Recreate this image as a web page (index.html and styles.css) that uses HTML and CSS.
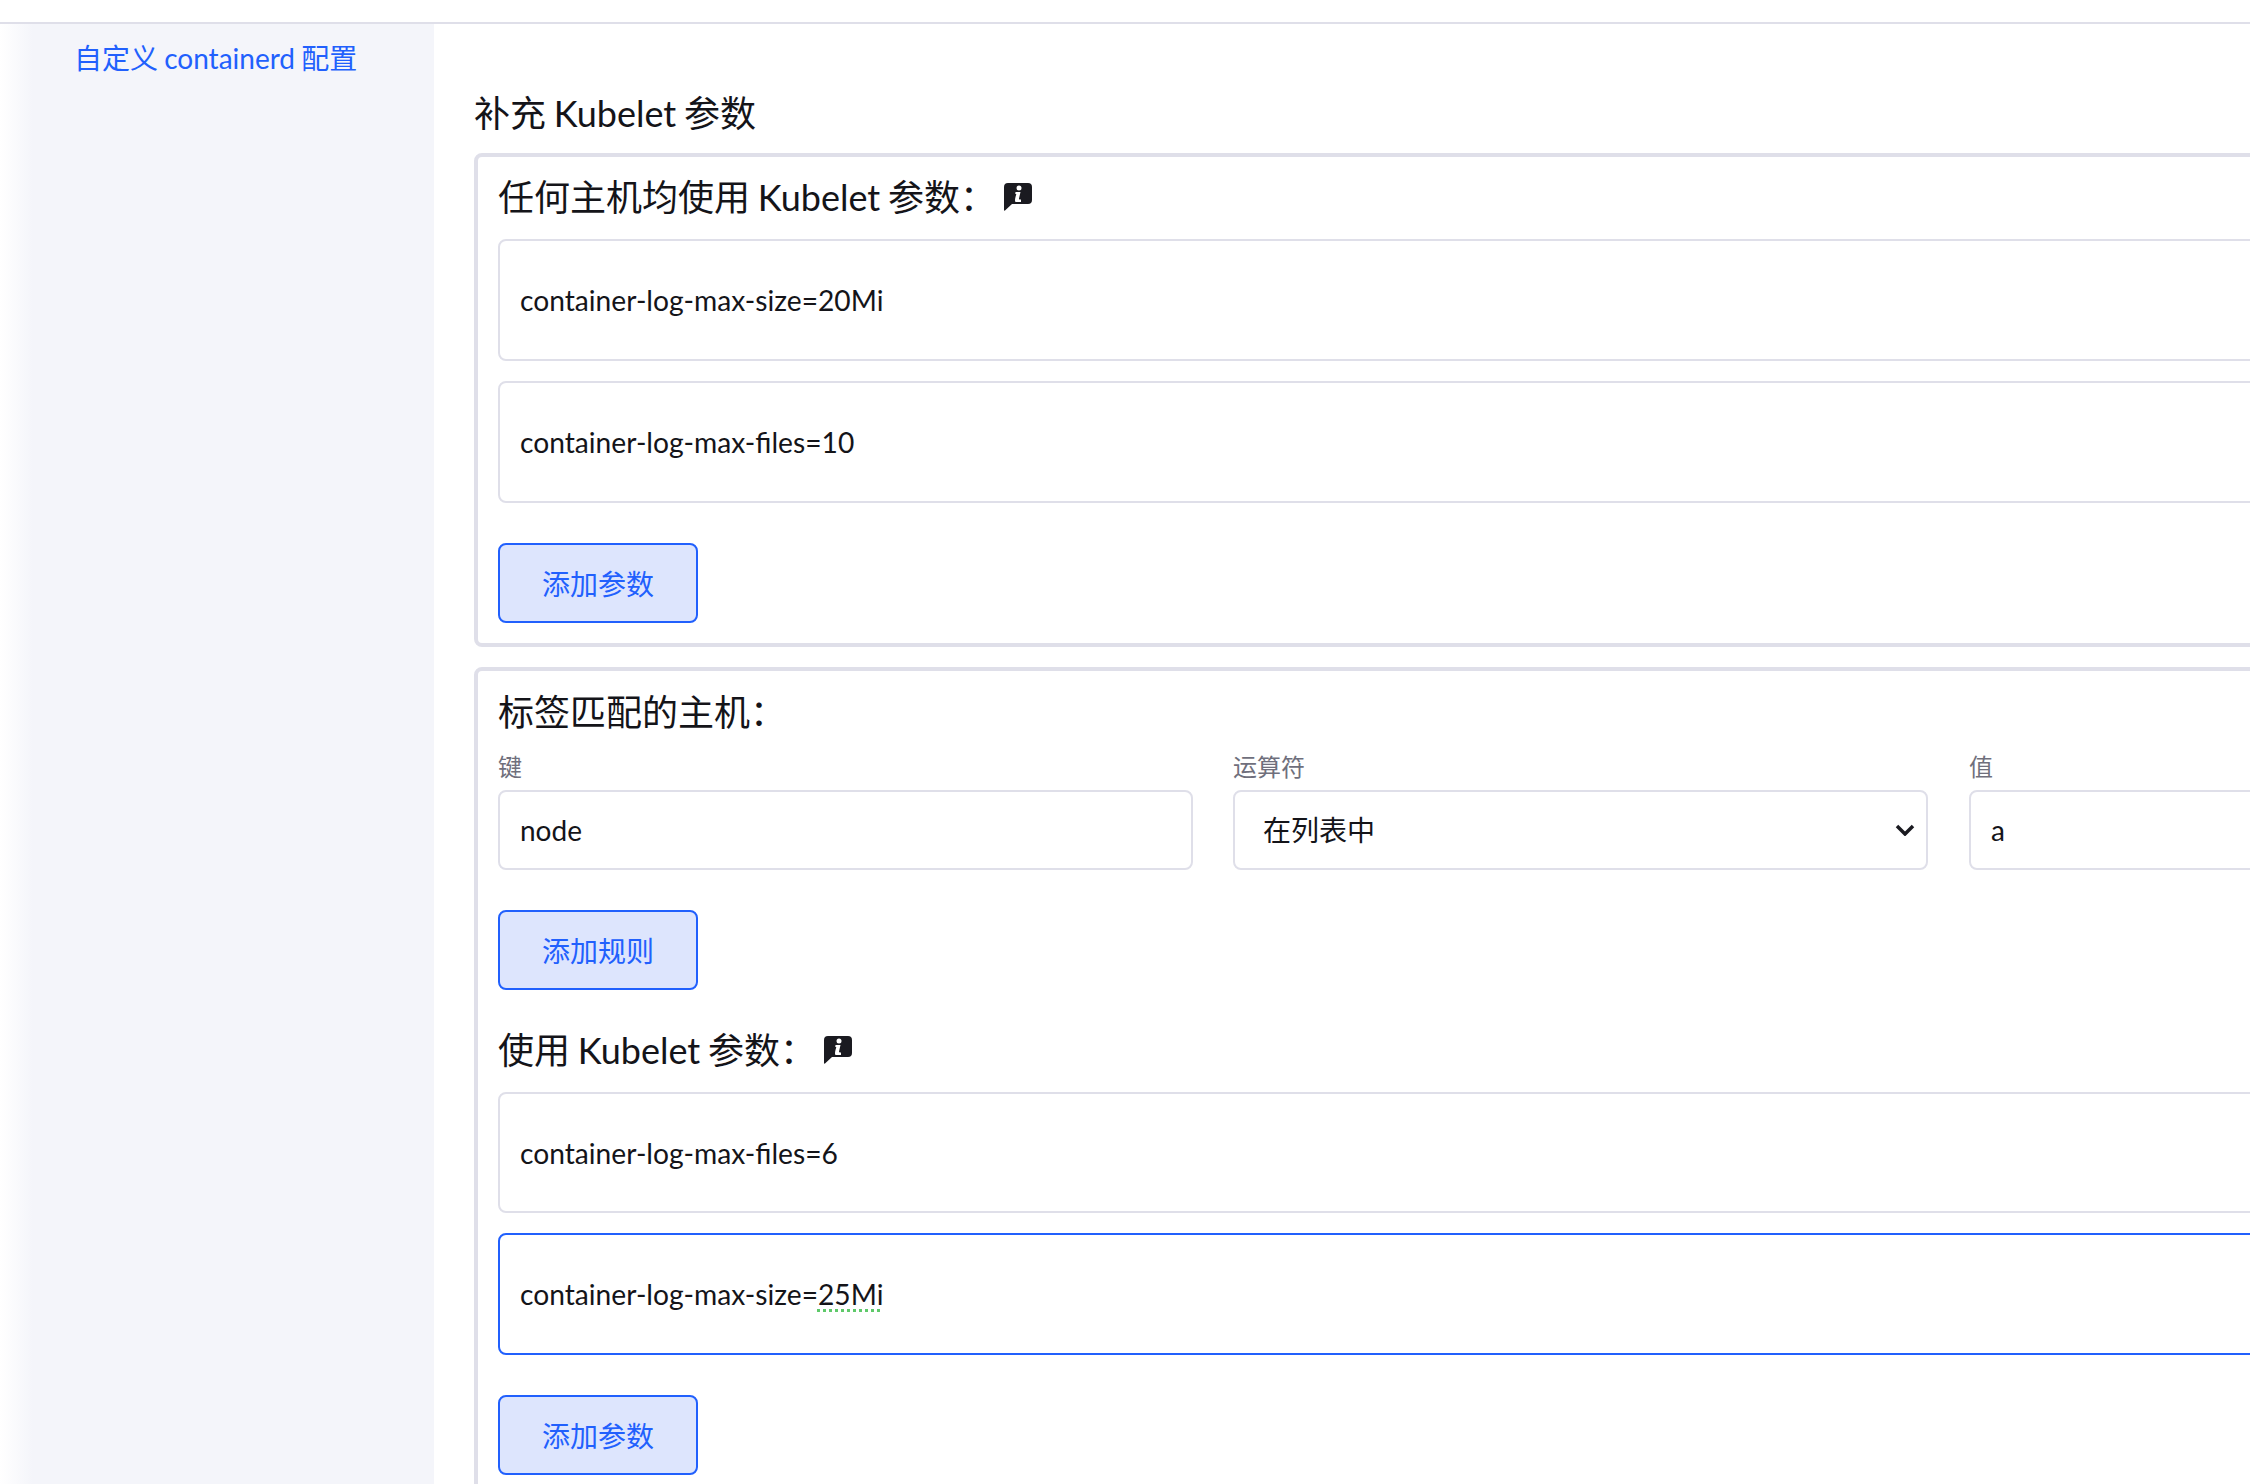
FILE: index.html
```html
<!DOCTYPE html>
<html lang="zh-CN">
<head>
<meta charset="utf-8">
<title>补充 Kubelet 参数</title>
<link rel="stylesheet" href="styles.css">
</head>
<body>
<header class="topbar"></header>
<div class="layout">
  <aside class="sidebar">
    <a class="side-link" href="#">自定义 containerd 配置</a>
  </aside>
  <main class="main">
    <h2 class="title">补充 Kubelet 参数</h2>
    <section class="box">
      <h3 class="heading"><span>任何主机均使用 Kubelet 参数：</span>
        <svg class="info" viewBox="0 0 28 28"><path d="M4 0H24A4 4 0 0 1 28 4V17A4 4 0 0 1 24 21H8L1 27.500Q0 28 0 27V4A4 4 0 0 1 4 0Z" fill="#1a1a20"/><circle cx="15" cy="5" r="2.500" fill="#fff"/><path d="M11.500 9H16.500L15 15.500Q14.800 16.800 17 16.500V19H11.500Q10.500 18 11.500 14L12.300 11H11.300Z" fill="#fff"/></svg>
      </h3>
      <div class="field">container-log-max-size=20Mi</div>
      <div class="field">container-log-max-files=10</div>
      <button class="btn" type="button">添加参数</button>
    </section>
    <section class="box">
      <h3 class="heading"><span>标签匹配的主机：</span></h3>
      <div class="rule">
        <label class="col"><span class="label">键</span><input class="input" value="node"></label>
        <label class="col col-op"><span class="label">运算符</span>
          <span class="select-wrap">
            <select class="select"><option>在列表中</option></select>
            <svg class="chevron" viewBox="0 0 20 12"><path d="M2 2L10 10L18 2" fill="none" stroke="#1a1a20" stroke-width="3.500"/></svg>
          </span>
        </label>
        <label class="col"><span class="label">值</span><input class="input" value="a"></label>
      </div>
      <button class="btn" type="button">添加规则</button>
      <h3 class="heading heading-sub"><span>使用 Kubelet 参数：</span>
        <svg class="info" viewBox="0 0 28 28"><path d="M4 0H24A4 4 0 0 1 28 4V17A4 4 0 0 1 24 21H8L1 27.500Q0 28 0 27V4A4 4 0 0 1 4 0Z" fill="#1a1a20"/><circle cx="15" cy="5" r="2.500" fill="#fff"/><path d="M11.500 9H16.500L15 15.500Q14.800 16.800 17 16.500V19H11.500Q10.500 18 11.500 14L12.300 11H11.300Z" fill="#fff"/></svg>
      </h3>
      <div class="field">container-log-max-files=6</div>
      <div class="field field-focus">container-log-max-size=<span class="spell">25Mi</span></div>
      <button class="btn" type="button">添加参数</button>
    </section>
  </main>
</div>
</body>
</html>
```

FILE: styles.css
```css
* { box-sizing: border-box; }
html, body { margin: 0; height: 100%; overflow: hidden; background: #fff; }
body {
  font-family: "Lato", "Noto Sans CJK SC", sans-serif;
  font-size: 28px;
  color: #141419;
}
.topbar { height: 24px; background: #fff; border-bottom: 2px solid #dfdfe9; }
.layout { display: flex; height: 1460px; overflow: hidden; }
.sidebar {
  flex: 0 0 434px;
  padding: 14px 0 0 74px;
  background: linear-gradient(to right, #fff 0, #f4f5fa 33px);
}
.side-link { color: #2160fd; text-decoration: none; line-height: 40px; word-spacing: -1px; }
.main { flex: 0 0 auto; width: 2300px; padding: 69px 0 0 40px; }
.title { margin: 0 0 20px; font-size: 36px; font-weight: 400; line-height: 40px; word-spacing: -1.5px; }
.box {
  border: 4px solid #dfdfe9;
  border-radius: 8px;
  padding: 20px;
  margin-bottom: 20px;
}
.box + .box { padding-top: 21px; }
.heading {
  display: flex;
  align-items: center;
  margin: 0 0 22px;
  font-size: 36px;
  font-weight: 400;
  line-height: 40px;
  word-spacing: -1.5px;
}
.heading-sub { margin-top: 40px; }
.info { width: 28px; height: 28px; margin-left: 8px; flex: none; }
.field {
  display: flex;
  align-items: center;
  height: 122px;
  margin-bottom: 20px;
  padding: 0 20px;
  border: 2px solid #dfdfe9;
  border-radius: 8px;
  background: #fff;
  white-space: pre;
  font-size: 28.2px;
}
.heading-sub + .field { height: 121px; }
.field-focus { border-color: #2160fd; }
.spell { text-decoration: underline dotted #5fc96a 3px; text-underline-offset: 4px; }
.btn {
  display: block;
  width: 200px;
  height: 80px;
  margin-top: 40px;
  border: 2px solid #2160fd;
  border-radius: 8px;
  background: #dde5fd;
  color: #2160fd;
  font: inherit;
}
.rule { display: grid; grid-template-columns: 695px 696px 695px; column-gap: 40px; margin-top: -4px; }
.col { display: flex; flex-direction: column; }
.col-op { padding-right: 1px; }
.label { font-size: 24px; line-height: 34px; color: #6f6f7c; margin-bottom: 6px; }
.input, .select {
  width: 100%;
  height: 80px;
  padding: 0 20px;
  border: 2px solid #dfdfe9;
  border-radius: 8px;
  background: #fff;
  color: inherit;
  font: inherit;
  outline: none;
}
.select { appearance: none; padding-left: 28px; }
.select-wrap { position: relative; display: block; }
.chevron { position: absolute; right: 13px; top: 34px; width: 20px; height: 12px; }
```
